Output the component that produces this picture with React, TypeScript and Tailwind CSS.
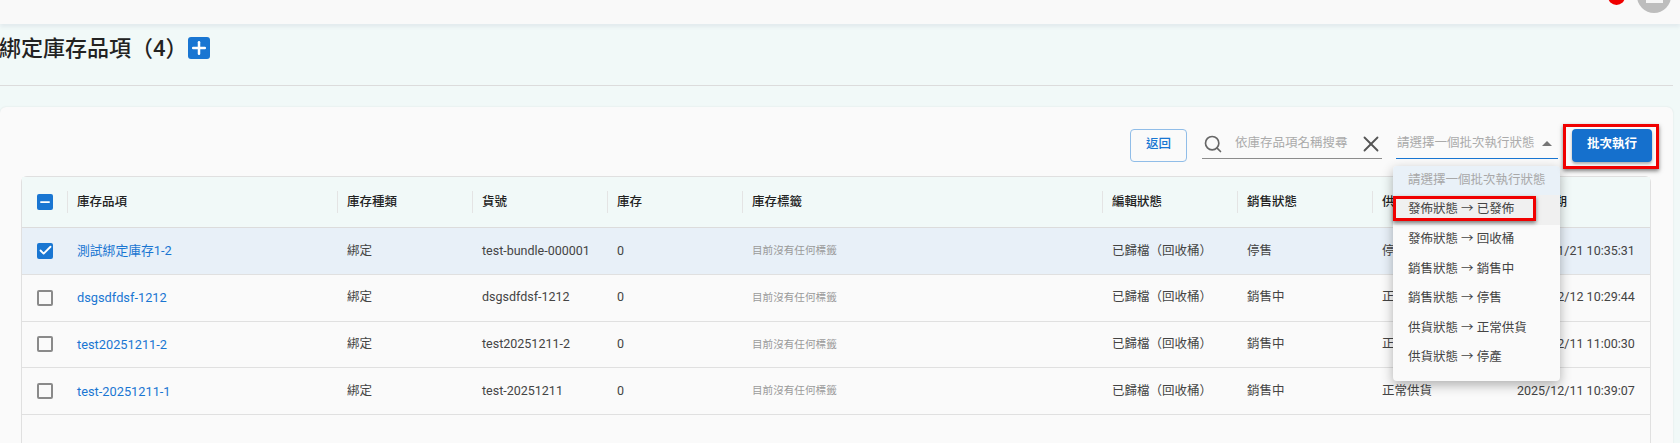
import { Search, X, Plus, Check, Minus } from "lucide-react";

type Row = { name: string; sku: string; edit: string; sale: string; supply: string; date: string; selected?: boolean };
const rows: Row[] = [
  { name: "測試綁定庫存1-2", sku: "test-bundle-000001", edit: "已歸檔（回收桶）", sale: "停售", supply: "停產", date: "2026/01/21 10:35:31", selected: true },
  { name: "dsgsdfdsf-1212", sku: "dsgsdfdsf-1212", edit: "已歸檔（回收桶）", sale: "銷售中", supply: "正常供貨", date: "2025/12/12 10:29:44" },
  { name: "test20251211-2", sku: "test20251211-2", edit: "已歸檔（回收桶）", sale: "銷售中", supply: "正常供貨", date: "2025/12/11 11:00:30" },
  { name: "test-20251211-1", sku: "test-20251211", edit: "已歸檔（回收桶）", sale: "銷售中", supply: "正常供貨", date: "2025/12/11 10:39:07" },
];
const headers = ["庫存品項", "庫存種類", "貨號", "庫存", "庫存標籤", "編輯狀態", "銷售狀態", "供貨狀態", "建立日期"];
const menu = ["發佈狀態 → 回收桶", "銷售狀態 → 銷售中", "銷售狀態 → 停售", "供貨狀態 → 正常供貨", "供貨狀態 → 停產"];
const grid = "grid grid-cols-[46px_270px_135px_135px_135px_360px_135px_135px_135px_1fr]";

function Box({ state }: { state: "on" | "off" | "mixed" }) {
  if (state === "off") return <span className="block h-4 w-4 rounded-[2px] border-2 border-[#8a8a8a]" />;
  return (
    <span className="flex h-4 w-4 items-center justify-center rounded-[2px] bg-[#1976d2] text-white">
      {state === "on" ? <Check size={15} strokeWidth={3} /> : <Minus size={14} strokeWidth={3} />}
    </span>
  );
}

export default function App() {
  return (
    <div className="relative h-[443px] w-[1680px] overflow-hidden bg-[#f1f9f8] text-[12.5px] text-[#444] font-['Roboto','Noto_Sans_CJK_TC',sans-serif]">
      <div className="relative flex h-6 justify-end bg-[#f9f9f9] pr-[9px] shadow-[0_3px_4px_rgba(60,60,110,0.08)]">
        <span className="-mt-3 mr-[12px] h-[17px] w-[17px] rounded-full bg-[#f00000]" />
        <span className="-mt-[21px] flex h-[34px] w-[34px] items-end justify-center rounded-full bg-[#bdbdbd] pb-[10px]"><span className="h-[16px] w-[17px] bg-[#f5f5f5]" /></span>
      </div>

      <div className="flex h-[61px] items-start pt-[13px]">
        <h1 className="-ml-[1px] pt-[1px] text-[22px] font-medium leading-[22px] text-[#222]">綁定庫存品項（4）</h1>
        <span className="flex h-[22px] w-[22px] items-center justify-center rounded-[3px] bg-[#1976d2] text-white"><Plus size={20} strokeWidth={3} /></span>
      </div>
      <div className="mr-[7px] border-t border-[#dcdcdc]" />

      <div className="mr-[7px] mt-[21px] h-[400px] rounded-md bg-[#fafafa] pl-[21px] pr-[22px] shadow-[0_0_2px_rgba(0,0,0,0.1)]">
        <div className="flex h-[69px] items-start justify-end pt-[22px]">
          <button className="mr-[15px] h-[33px] w-[57px] rounded-[4px] border border-[#90bde8] pb-[2px] font-medium text-[#1976d2]">返回</button>
          <div className="mr-[14px] flex h-[30px] w-[180px] items-center border-b border-[#8c8c8c] pl-[1px] text-[#aaa]">
            <Search size={20} className="shrink-0 text-[#666]" />
            <span className="ml-[12px] flex-1 whitespace-nowrap">依庫存品項名稱搜尋</span>
            <X size={26} strokeWidth={1.7} className="-mr-[2px] shrink-0 text-[#555]" />
          </div>
          <div className="mr-[14px] flex h-[30px] w-[162px] items-center border-b border-[#1976d2] pl-[1px] text-[#aaa]">
            <span className="flex-1 whitespace-nowrap">請選擇一個批次執行狀態</span>
            <span className="mr-[6px] h-0 w-0 border-x-[5px] border-b-[5px] border-x-transparent border-b-[#757575]" />
          </div>
          <button className="-mr-[1px] h-[33px] w-20 rounded-[4px] bg-[#1570cd] pb-[2px] font-bold text-white shadow-[0_2px_3px_rgba(0,0,0,0.3)]">批次執行</button>
        </div>

        <div className="h-[300px] rounded-t-md border border-[#e0e0e0]">
          <div className={`${grid} h-[51px] items-center border-b border-[#dcdcdc] bg-[#f1f9f8] font-medium text-[#222]`}>
            <div className="flex h-[22px] items-center justify-center border-r border-[#e4e4e4]"><Box state="mixed" /></div>
            {headers.map((h, i) => (
              <div key={h} className={`flex h-[22px] items-center whitespace-nowrap pl-[9px] ${i < 8 ? "border-r border-[#e4e4e4]" : ""}`}>{h}</div>
            ))}
          </div>
          {rows.map((r) => (
            <div key={r.name} className={`${grid} h-[46.8px] items-center border-b border-[#e0e0e0] ${r.selected ? "bg-[#e8f0f8]" : ""}`}>
              <div className="flex justify-center"><Box state={r.selected ? "on" : "off"} /></div>
              <div className="pl-[9px] text-[12.8px] text-[#1976d2]">{r.name}</div>
              <div className="pl-[9px]">綁定</div>
              <div className="pl-[9px]">{r.sku}</div>
              <div className="pl-[9px]">0</div>
              <div className="pl-[9px] text-[10.6px] text-[#9a9a9a]">目前沒有任何標籤</div>
              <div className="pl-[9px]">{r.edit}</div>
              <div className="pl-[9px]">{r.sale}</div>
              <div className="pl-[9px]">{r.supply}</div>
              <div className="whitespace-nowrap pl-[9px]">{r.date}</div>
            </div>
          ))}
        </div>
      </div>

      {/* open select menu */}
      <div className="absolute left-[1393px] top-[166px] w-[167px] overflow-hidden rounded-[4px] bg-[#fafafa] shadow-[0_4px_12px_rgba(0,0,0,0.3)]">
        <div className="flex h-[29px] items-center bg-[#e9f1f8] pb-[1px] pl-[15px] text-[#a8a8a8]">請選擇一個批次執行狀態</div>
        <div className="flex h-[30px] items-center bg-[#f0f0f0] pb-[1px] pl-[15px]">發佈狀態 → 已發佈</div>
        {menu.map((m) => (
          <div key={m} className="flex h-[29.5px] items-center pl-[15px]">{m}</div>
        ))}
        <div className="h-[8px]" />
      </div>

      {/* red annotation frames */}
      <div className="absolute left-[1393px] top-[196px] h-[25px] w-[143px] border-[3px] border-[#f00000] shadow-[0_2px_4px_rgba(0,0,0,0.5)]" />
      <div className="absolute left-[1563px] top-[124px] h-[45px] w-[96px] border-[3px] border-[#f00000] shadow-[0_2px_4px_rgba(0,0,0,0.5)]" />
    </div>
  );
}
